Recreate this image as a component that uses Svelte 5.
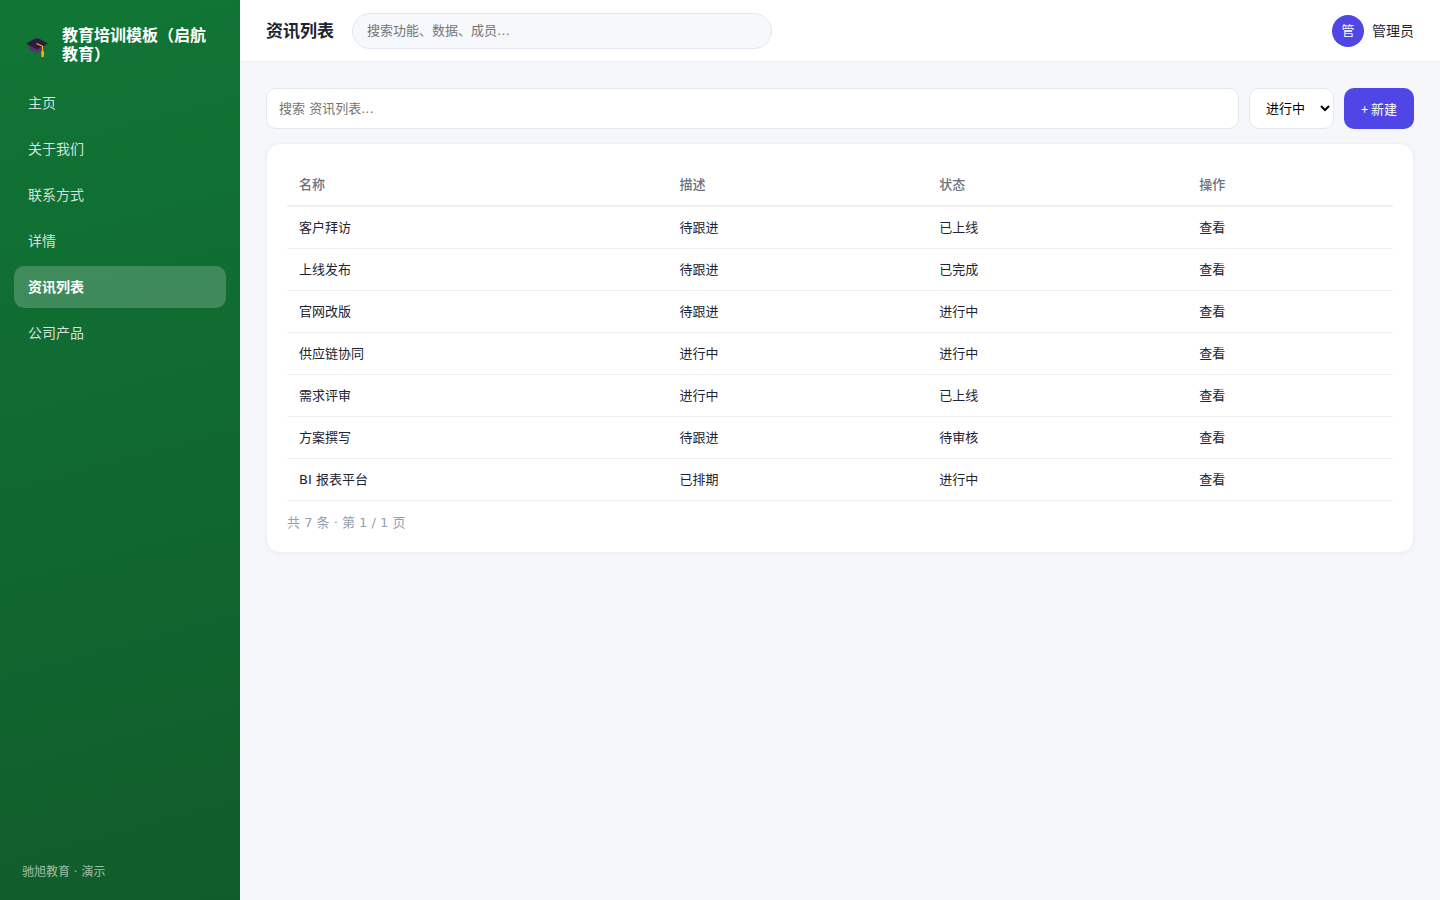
<script>
  const navItems = ['主页', '关于我们', '联系方式', '详情', '资讯列表', '公司产品'];
  const current = '资讯列表';

  const rows = [
    { name: '客户拜访', desc: '待跟进', status: '已上线' },
    { name: '上线发布', desc: '待跟进', status: '已完成' },
    { name: '官网改版', desc: '待跟进', status: '进行中' },
    { name: '供应链协同', desc: '进行中', status: '进行中' },
    { name: '需求评审', desc: '进行中', status: '已上线' },
    { name: '方案撰写', desc: '待跟进', status: '待审核' },
    { name: 'BI 报表平台', desc: '已排期', status: '进行中' }
  ];

  const statuses = ['进行中', '已上线', '已完成', '待审核'];
  let status = $state('进行中');
</script>

<div class="app">
  <aside class="sidebar">
    <div class="brand">
      <svg class="logo" viewBox="0 0 22 22" aria-hidden="true">
        <path d="M3 9.5v3.2c1 2.6 3.8 3.8 7.8 3.8s6.600-1.200 7.400-3.800V9.500z" fill="#533566" />
        <path d="M9.500 2.500 Q11 1.800 12.500 2.500 L22 7.600 L12.500 12.800 Q11 13.500 9.500 12.800 L0 7.600 Z" fill="#2d1b3d" />
        <path d="M10.500 7.500 L16.500 10.200 V15.500" fill="none" stroke="#fbb02d" stroke-width="1.200" stroke-linejoin="round" />
        <path d="M15.300 15h2.400l.5 2.200-.5 3.800h-2.400z" fill="#f9a825" />
      </svg>
      <div class="brand-name">教育培训模板（启航教育）</div>
    </div>
    <nav class="nav">
      {#each navItems as item}
        <a href="#top" class:active={item === current}>{item}</a>
      {/each}
    </nav>
    <div class="side-foot">驰旭教育 · 演示</div>
  </aside>

  <div class="main">
    <header class="topbar">
      <h1>资讯列表</h1>
      <input class="global-search" type="search" aria-label="搜索" placeholder="搜索功能、数据、成员…" />
      <div class="user">
        <span class="avatar">管</span>
        <span>管理员</span>
      </div>
    </header>

    <main class="content">
      <div class="toolbar">
        <input type="text" aria-label="搜索 资讯列表" placeholder="搜索 资讯列表..." />
        <select aria-label="状态" bind:value={status}>
          {#each statuses as s}
            <option>{s}</option>
          {/each}
        </select>
        <button type="button">+ 新建</button>
      </div>

      <section class="card">
        <table>
          <thead>
            <tr>
              <th class="col-name">名称</th>
              <th class="col-mid">描述</th>
              <th class="col-mid">状态</th>
              <th>操作</th>
            </tr>
          </thead>
          <tbody>
            {#each rows as row}
              <tr>
                <td>{row.name}</td>
                <td>{row.desc}</td>
                <td>{row.status}</td>
                <td><a href="#top">查看</a></td>
              </tr>
            {/each}
          </tbody>
        </table>
        <div class="pager">共 {rows.length} 条 · 第 1 / 1 页</div>
      </section>
    </main>
  </div>
</div>

<style>
  :global(body) {
    margin: 0;
    background: #f5f7fb;
  }

  .app {
    display: flex;
    min-height: 100vh;
    font-family: 'DejaVu Sans', 'Noto Sans CJK SC', sans-serif;
    font-size: 14px;
    line-height: 22px;
    color: #1e2433;
  }

  .app * {
    box-sizing: border-box;
  }

  a {
    color: inherit;
    text-decoration: none;
  }

  .sidebar {
    flex: 0 0 240px;
    display: flex;
    flex-direction: column;
    padding: 26px 14px 17px;
    background: linear-gradient(165deg, #107636, #115c2b);
    color: #fff;
  }

  .brand {
    display: flex;
    align-items: flex-end;
    gap: 14px;
    padding: 0 12px 18px;
  }

  .logo {
    flex: none;
    width: 22px;
    height: 22px;
    margin-bottom: 6px;
  }

  .brand-name {
    font-size: 16px;
    line-height: 19px;
    font-weight: 700;
  }

  .nav {
    display: flex;
    flex-direction: column;
    gap: 4px;
  }

  .nav a {
    padding: 10px 14px;
    border-radius: 10px;
    color: rgba(255, 255, 255, 0.82);
  }

  .nav a.active {
    background: rgba(255, 255, 255, 0.2);
    color: #fff;
    font-weight: 700;
  }

  .side-foot {
    margin-top: auto;
    padding: 0 8px;
    font-size: 12px;
    color: rgba(255, 255, 255, 0.6);
  }

  .main {
    flex: 1;
    min-width: 0;
  }

  .topbar {
    display: flex;
    align-items: center;
    gap: 18px;
    padding: 12px 26px;
    min-height: 62px;
    background: #fff;
    border-bottom: 1px solid #eceef4;
  }

  h1 {
    margin: 0;
    font-size: 17px;
    line-height: 26px;
    font-weight: 700;
    white-space: nowrap;
  }

  input,
  select,
  button {
    margin: 0;
    font-family: inherit;
    font-size: 13px;
    line-height: 20px;
  }

  input::placeholder {
    color: #757575;
    opacity: 1;
  }

  .global-search {
    flex: 0 1 420px;
    min-width: 0;
    height: 36px;
    padding: 0 14px;
    border: 1px solid #e4e7f0;
    border-radius: 18px;
    background: #f7f8fc;
    appearance: none;
  }

  .user {
    display: flex;
    align-items: center;
    gap: 8px;
    margin-left: auto;
    white-space: nowrap;
  }

  .avatar {
    display: grid;
    place-items: center;
    width: 32px;
    height: 32px;
    border-radius: 50%;
    background: #4f46e5;
    color: #fff;
    font-size: 13px;
  }

  .content {
    padding: 26px;
  }

  .toolbar {
    display: flex;
    gap: 10px;
    margin-bottom: 14px;
  }

  .toolbar input {
    flex: 1;
    min-width: 0;
    height: 41px;
    padding: 0 12px;
    border: 1px solid #e4e7f0;
    border-radius: 10px;
    background: #fff;
  }

  .toolbar select {
    width: 85px;
    padding: 0 0 0 12px;
    border: 1px solid #e4e7f0;
    border-radius: 10px;
    background: #fff;
    color: #000;
  }

  .toolbar button {
    min-width: 70px;
    padding: 0 16px;
    border: 0;
    border-radius: 10px;
    background: #4f46e5;
    color: #fff;
    font-family: 'Noto Sans CJK SC', sans-serif;
    white-space: nowrap;
  }

  .card {
    padding: 20px 20px 19px;
    border: 1px solid #eef0f5;
    border-radius: 14px;
    background: #fff;
    box-shadow: 0 1px 4px rgba(30, 36, 51, 0.04);
  }

  table {
    width: 100%;
    border-collapse: separate;
    border-spacing: 0;
    table-layout: fixed;
    font-size: 13px;
    line-height: 21px;
  }

  th,
  td {
    padding: 10px 12px;
    border-bottom: 1px solid #eef0f4;
    text-align: left;
  }

  th {
    border-bottom-width: 2px;
    font-weight: 500;
    color: #6b7280;
  }

  .col-name {
    width: 34.4%;
  }

  .col-mid {
    width: 23.5%;
  }

  .pager {
    margin-top: 12px;
    font-size: 13px;
    line-height: 20px;
    color: #94a0b4;
  }
</style>
